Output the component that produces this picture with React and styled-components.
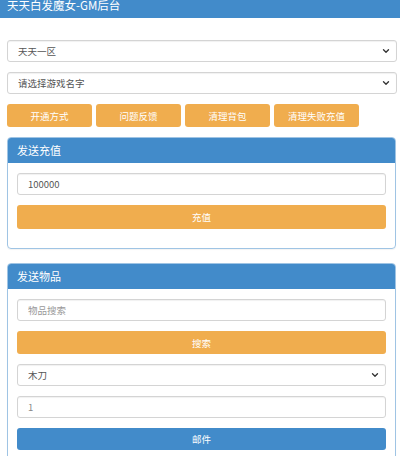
import styled, { createGlobalStyle } from "styled-components";
import { ChevronDown } from "lucide-react";

const GlobalStyle = createGlobalStyle`
  body {
    margin: 0;
    background: #fff;
    font-family: "Noto Sans CJK SC", "Noto Sans", sans-serif;
    color: #555;
  }
`;

// Header bar
const Header = styled.header`
  height: 18px;
  background: #428bca;
  overflow: hidden;
  padding-left: 7px;
`;

const Title = styled.div`
  color: #fff;
  font-size: 11.5px;
  line-height: 12px;
  margin-top: -1px;
  white-space: nowrap;
`;

const Page = styled.main`
  display: flex;
  flex-direction: column;
  gap: 10px;
  padding: 22px 3px 0 7px;
`;

const SelectWrap = styled.div`
  position: relative;
  height: 22px;
  svg {
    position: absolute;
    right: 6px;
    top: 50%;
    transform: translateY(-50%);
    color: #333;
    pointer-events: none;
  }
`;

const Select = styled.select`
  appearance: none;
  display: block;
  width: 100%;
  height: 22px;
  box-sizing: border-box;
  padding: 0 10px;
  font-family: inherit;
  font-size: 9.5px;
  color: #555;
  background: #fff;
  border: 1px solid #d4d4d4;
  border-radius: 3px;
  box-shadow: inset 0 1px 1px rgba(0, 0, 0, 0.06);
  outline: none;
`;

const Input = styled.input`
  display: block;
  width: 100%;
  height: 22px;
  box-sizing: border-box;
  padding: 0 10px;
  font-family: inherit;
  font-size: 9.5px;
  color: ${(p) => (p.$muted ? "#888" : "#555")};
  background: #fff;
  border: 1px solid #d4d4d4;
  border-radius: 3px;
  box-shadow: inset 0 1px 1px rgba(0, 0, 0, 0.06);
  outline: none;
  &::placeholder {
    color: #999;
  }
`;

const ToolBar = styled.div`
  display: flex;
  gap: 4px;
`;

const Button = styled.button`
  display: block;
  height: ${(p) => p.$h || 24}px;
  width: ${(p) => (p.$block ? "100%" : "85px")};
  flex: none;
  border: none;
  border-radius: 3px;
  background: ${(p) => (p.$blue ? "#428bca" : "#f0ad4e")};
  color: #fff;
  font-family: inherit;
  font-size: 9.5px;
  padding: 0;
  cursor: pointer;
`;

const Panel = styled.section`
  border: 1px solid #9fc4e4;
  border-radius: 4px;
  overflow: hidden;
  box-shadow: 0 1px 1px rgba(0, 0, 0, 0.05);
  margin-top: ${(p) => p.$top || 0}px;
  margin-right: 1px;
`;

const PanelHeading = styled.div`
  height: 25px;
  background: #428bca;
  color: #fff;
  font-size: 11px;
  line-height: 25px;
  padding-left: 9px;
`;

const PanelBody = styled.div`
  display: flex;
  flex-direction: column;
  gap: 10px;
  padding: 10px 9px 19px 9px;
`;

const Dropdown = ({ children }) => (
  <SelectWrap>
    <Select>{children}</Select>
    <ChevronDown size={10} strokeWidth={3.2} />
  </SelectWrap>
);

export default function App() {
  return (
    <>
      <GlobalStyle />
      <Header>
        <Title>天天白发魔女-GM后台</Title>
      </Header>
      <Page>
        <Dropdown>
          <option>天天一区</option>
        </Dropdown>
        <Dropdown>
          <option>请选择游戏名字</option>
        </Dropdown>
        <ToolBar>
          <Button $h={23}>开通方式</Button>
          <Button $h={23}>问题反馈</Button>
          <Button $h={23}>清理背包</Button>
          <Button $h={23}>清理失败充值</Button>
        </ToolBar>
        <Panel>
          <PanelHeading>发送充值</PanelHeading>
          <PanelBody>
            <Input defaultValue="100000" />
            <Button $block>充值</Button>
          </PanelBody>
        </Panel>
        <Panel $top={4}>
          <PanelHeading>发送物品</PanelHeading>
          <PanelBody>
            <Input placeholder="物品搜索" />
            <Button $block $h={23}>搜索</Button>
            <Dropdown>
              <option>木刀</option>
            </Dropdown>
            <Input defaultValue="1" $muted />
            <Button $block $blue $h={22}>邮件</Button>
            <Dropdown>
              <option>请选择</option>
            </Dropdown>
          </PanelBody>
        </Panel>
      </Page>
    </>
  );
}
